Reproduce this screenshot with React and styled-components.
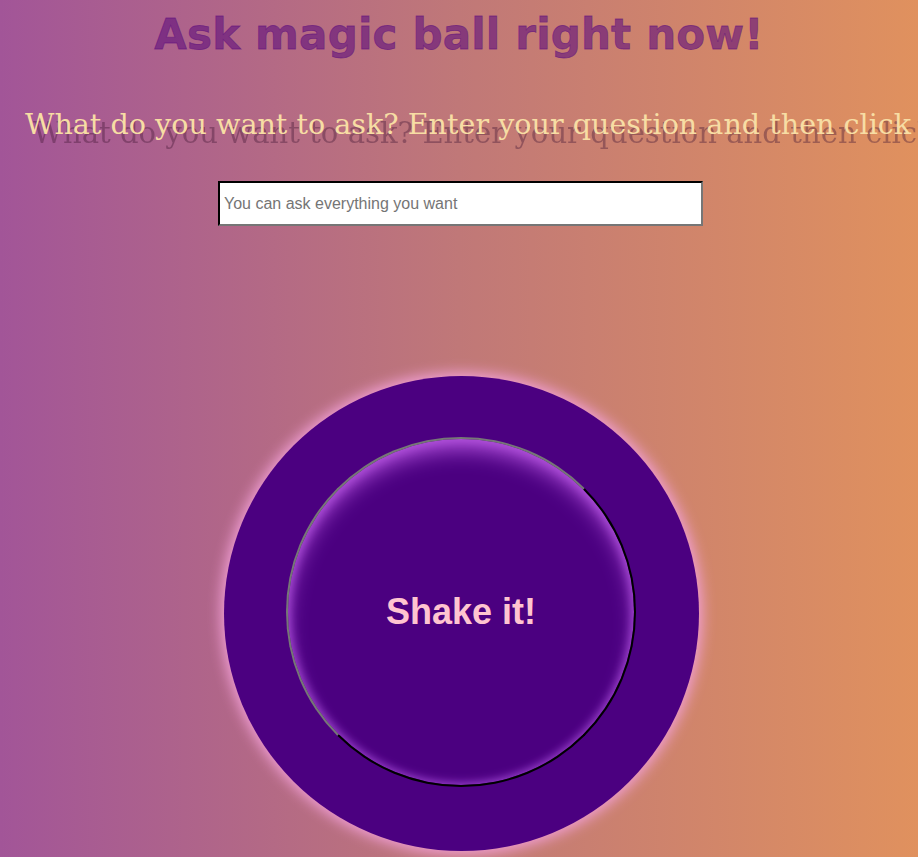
import React from "react";
import styled, { createGlobalStyle } from "styled-components";

const GlobalStyle = createGlobalStyle`
  html, body {
    margin: 0;
    padding: 0;
    overflow: hidden;
  }
  body {
    min-height: 857px;
    background: linear-gradient(90deg, #a25598 0%, #c07878 50%, #e0915e 100%);
    font-family: "Liberation Sans", Arial, sans-serif;
  }
`;

const Page = styled.div`
  display: flex;
  flex-direction: column;
  align-items: center;
  min-height: 857px;
`;

const Title = styled.h1`
  margin: 7px 0 0;
  font-family: "DejaVu Sans", sans-serif;
  font-weight: 900;
  font-size: 42px;
  letter-spacing: 0.2px;
  line-height: 56px;
  color: rgba(95, 15, 125, 0.6);
  -webkit-text-stroke: 0.8px rgba(95, 15, 125, 0.6);
`;

const Subtitle = styled.div`
  position: relative;
  align-self: flex-start;
  margin: 43px 0 0 25px;
  white-space: nowrap;
  font-family: "DejaVu Serif", "Liberation Serif", serif;
  font-size: 28.6px;
  line-height: 36px;
`;

const SubtitleText = styled.span`
  position: relative;
  color: #f7dda4;
`;

const SubtitleShadow = styled.span`
  position: absolute;
  left: 8px;
  top: 9px;
  font-size: 29.1px;
  color: rgba(70, 25, 55, 0.4);
  filter: blur(0.6px);
`;

const Question = styled.input`
  box-sizing: border-box;
  margin: 39px 0 0 3px;
  width: 485px;
  height: 45px;
  padding: 0 4px;
  border: 2px inset #767676;
  border-top-color: #222;
  border-left-color: #222;
  background: #fff;
  font-family: "Liberation Sans", Arial, sans-serif;
  font-size: 16px;
  outline: none;

  &::placeholder {
    color: #757575;
  }
`;

const Ball = styled.div`
  margin: 150px 0 0 4px;
  width: 475px;
  height: 475px;
  border-radius: 50%;
  background: #4b0080;
  box-shadow: 0 0 14px 3px #f3a0d8;
  display: flex;
  align-items: center;
  justify-content: center;
`;

const ShakeButton = styled.button`
  box-sizing: border-box;
  width: 350px;
  height: 350px;
  margin-top: -3px;
  border-radius: 50%;
  border: 2px outset #767676;
  border-right-color: #222;
  border-bottom-color: #222;
  background: #4b0080;
  box-shadow: inset 0 14px 22px -4px #b352dc, inset 0 0 10px 2px #9a40cc;
  color: #ffc4d0;
  font-family: "Liberation Sans", Arial, sans-serif;
  font-weight: bold;
  font-size: 36px;
  cursor: pointer;
`;

export default function App() {
  const line = "What do you want to ask? Enter your question and then click";
  return (
    <Page>
      <GlobalStyle />
      <Title>Ask magic ball right now!</Title>
      <Subtitle>
        <SubtitleShadow>{line}</SubtitleShadow>
        <SubtitleText>{line}</SubtitleText>
      </Subtitle>
      <Question type="text" placeholder="You can ask everything you want" />
      <Ball>
        <ShakeButton>Shake it!</ShakeButton>
      </Ball>
    </Page>
  );
}
